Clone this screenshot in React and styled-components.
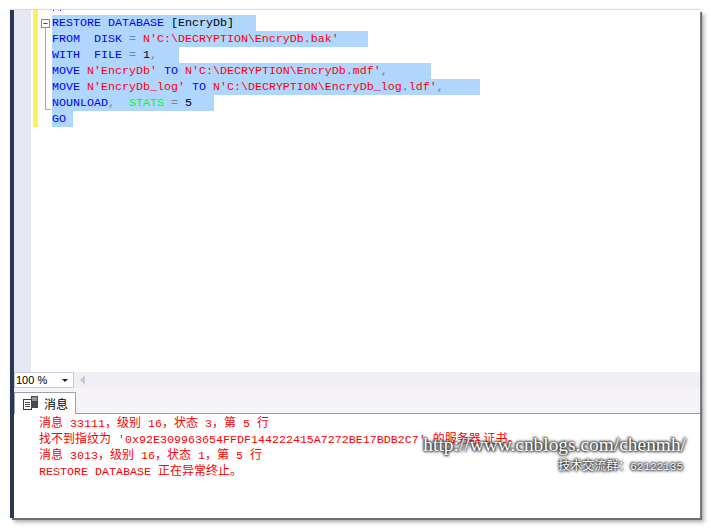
import React from "react";
import styled, { createGlobalStyle } from "styled-components";

const Global = createGlobalStyle`
  html, body { margin: 0; padding: 0; background: #ffffff; }
  body { width: 711px; height: 529px; overflow: hidden; }
`;

const mono = `"Liberation Mono", "Noto Sans CJK SC", monospace`;

const Page = styled.div`
  position: relative;
  width: 711px;
  height: 529px;
  padding: 10px 11px 11px 10px;
  box-sizing: border-box;
`;
const Win = styled.div`
  display: flex;
  width: 690px;
  height: 508px;
  background: #fff;
  box-shadow: 0 -1px 1px #dcdcdc, 2px 2px 0 #6e6e6e, 4px 4px 4px #a8a8a8;
`;
const NavyStrip = styled.div`
  width: 4px;
  background: #293955;
`;
const Main = styled.div`
  flex: 1;
  display: flex;
  flex-direction: column;
  min-width: 0;
`;
const Editor = styled.div`
  height: 362px;
  display: flex;
`;
const Gutter = styled.div`
  width: 17px;
  margin-right: 2px;
  background: #e6e7f2;
`;
const ChangeBar = styled.div`
  width: 5px;
  height: 117px;
  background: #ffee62;
`;
const FoldColumn = styled.div`
  width: 14px;
  padding-top: 9px;
  svg { display: block; }
`;
const Code = styled.div`
  flex: 1;
  font: 11.67px/16px ${mono};
  color: #000;
`;
const Ticks = styled.div`
  height: 5px;
  display: flex;
  gap: 6px;
  padding-left: 1px;
`;
const Tick = styled.i`
  width: 1px;
  height: 1px;
  background: #0000ff;
`;
const Row = styled.div`
  height: 16px;
  width: ${(p) => p.$w}px;
  background: #aed6ff;
  white-space: pre;
`;
const B = styled.span`color: #0000ff;`;
const R = styled.span`color: #ff0000;`;
const G = styled.span`color: #808080;`;
const Fn = styled.span`color: #00ff00;`;

const ZoomBar = styled.div`
  height: 16px;
  display: flex;
  align-items: center;
  background: #f1eff5;
`;
const ZoomSelect = styled.div`
  width: 60px;
  height: 16px;
  box-sizing: border-box;
  border: 1px solid #c3cad8;
  background: #fff;
  display: flex;
  align-items: center;
  justify-content: space-between;
  padding: 0 5px 0 1px;
  font: 11px/14px "Liberation Sans", sans-serif;
  color: #000;
`;
const Caret = styled.span`
  width: 0;
  height: 0;
  border-left: 3px solid transparent;
  border-right: 3px solid transparent;
  border-top: 3px solid #1e1e1e;
`;
const ScrollLeft = styled.span`
  margin-left: 6px;
  width: 0;
  height: 0;
  border-top: 5px solid transparent;
  border-bottom: 5px solid transparent;
  border-right: 5px solid #c9c9d2;
`;
const TabStrip = styled.div`
  height: 26px;
  box-sizing: border-box;
  display: flex;
  align-items: flex-end;
  background: #f5f3f8;
  border-bottom: 1px solid #9b9ba0;
  padding-top: 4px;
`;
const Tab = styled.div`
  width: 62px;
  height: 22px;
  margin-bottom: -1px;
  box-sizing: border-box;
  background: #fff;
  border: 1px solid #9ca3ad;
  border-bottom: none;
  display: flex;
  align-items: center;
  gap: 5px;
  padding-left: 8px;
  font: 12px/14px "Noto Sans CJK SC", sans-serif;
  color: #000;
`;
const Messages = styled.div`
  flex: 1;
  padding: 0 0 0 25px;
  font: 11.67px/16px ${mono};
  color: #ff0000;
  white-space: pre;
`;
const Line = styled.div`
  height: 16px;
`;
const Cjk = styled.span`
  display: inline-block;
  font-size: 12px;
  line-height: 16px;
  font-family: "Noto Sans CJK SC", sans-serif;
`;
const Watermark = styled.div`
  position: absolute;
  right: 24px;
  top: 433px;
  width: 270px;
  text-align: right;
  color: #fff;
  text-shadow: 0 0 2px #222, 0 0 3px #333, 1px 1px 3px #444, -1px -1px 3px #555;
  white-space: nowrap;
`;
const WmUrl = styled.div`
  font: 19.4px/24px "Liberation Serif", serif;
  padding-right: 1px;
`;
const WmGroup = styled.div`
  height: 16px;
  font: 11px/16px "Liberation Mono", sans-serif;
  padding-right: 4px;
`;

const FoldIcon = () => (
  <svg width="14" height="102" viewBox="0 0 14 102" fill="none">
    <rect x="3.5" y="0.5" width="8" height="8" fill="#fff" stroke="#8a8a8a" />
    <path d="M5.5 4.5h4" stroke="#444" />
    <path d="M7.5 9v81.5h5" stroke="#a8a8a8" />
  </svg>
);

const TabIcon = () => (
  <svg width="16" height="15" viewBox="0 0 16 15" fill="none">
    <rect x="0.5" y="3.5" width="8" height="10" fill="#fff" stroke="#3a3a3a" />
    <path d="M2 6.5h5M2 8.5h5M2 10.5h5" stroke="#555" />
    <rect x="8" y="0" width="7" height="12" fill="#4a4a4a" />
    <path d="M9 2h5M9 4h5" stroke="#ddd" />
  </svg>
);

export default function App() {
  return (
    <>
      <Global />
      <Page>
        <Win>
          <NavyStrip />
          <Main>
            <Editor>
              <Gutter />
              <ChangeBar />
              <FoldColumn>
                <FoldIcon />
              </FoldColumn>
              <Code>
                <Ticks>
                  <Tick />
                  <Tick />
                </Ticks>
                <Row $w={204}>
                  <B>RESTORE DATABASE</B> [EncryDb]
                </Row>
                <Row $w={316}>
                  <B>FROM  DISK</B> <G>=</G> <R>N'C:\DECRYPTION\EncryDb.bak'</R>
                </Row>
                <Row $w={127}>
                  <B>WITH  FILE</B> <G>=</G> 1<G>,</G>
                </Row>
                <Row $w={379}>
                  <B>MOVE</B> <R>N'EncryDb'</R> <B>TO</B> <R>N'C:\DECRYPTION\EncryDb.mdf'</R>
                  <G>,</G>
                </Row>
                <Row $w={428}>
                  <B>MOVE</B> <R>N'EncryDb_log'</R> <B>TO</B> <R>N'C:\DECRYPTION\EncryDb_log.ldf'</R>
                  <G>,</G>
                </Row>
                <Row $w={162}>
                  <B>NOUNLOAD</B>
                  <G>,</G>  <Fn>STATS</Fn> <G>=</G> 5
                </Row>
                <Row $w={21}>
                  <B>GO</B>
                </Row>
              </Code>
            </Editor>
            <ZoomBar>
              <ZoomSelect>
                100 %
                <Caret />
              </ZoomSelect>
              <ScrollLeft />
            </ZoomBar>
            <TabStrip>
              <Tab>
                <TabIcon />
                消息
              </Tab>
            </TabStrip>
            <Messages>
              <Line>
                <Cjk>消息</Cjk> 33111<Cjk>，级别</Cjk> 16<Cjk>，状态</Cjk> 3<Cjk>，第</Cjk> 5 <Cjk>行</Cjk>
              </Line>
              <Line>
                <Cjk>找不到指纹为</Cjk> '0x92E309963654FFDF144222415A7272BE17BDB2C7' <Cjk>的服务器 证书。</Cjk>
              </Line>
              <Line>
                <Cjk>消息</Cjk> 3013<Cjk>，级别</Cjk> 16<Cjk>，状态</Cjk> 1<Cjk>，第</Cjk> 5 <Cjk>行</Cjk>
              </Line>
              <Line>
                RESTORE DATABASE <Cjk>正在异常终止。</Cjk>
              </Line>
            </Messages>
          </Main>
        </Win>
        <Watermark>
          <WmUrl>http://www.cnblogs.com/chenmh/</WmUrl>
          <WmGroup>
            <Cjk>技术交流群：</Cjk>62122135
          </WmGroup>
        </Watermark>
      </Page>
    </>
  );
}
